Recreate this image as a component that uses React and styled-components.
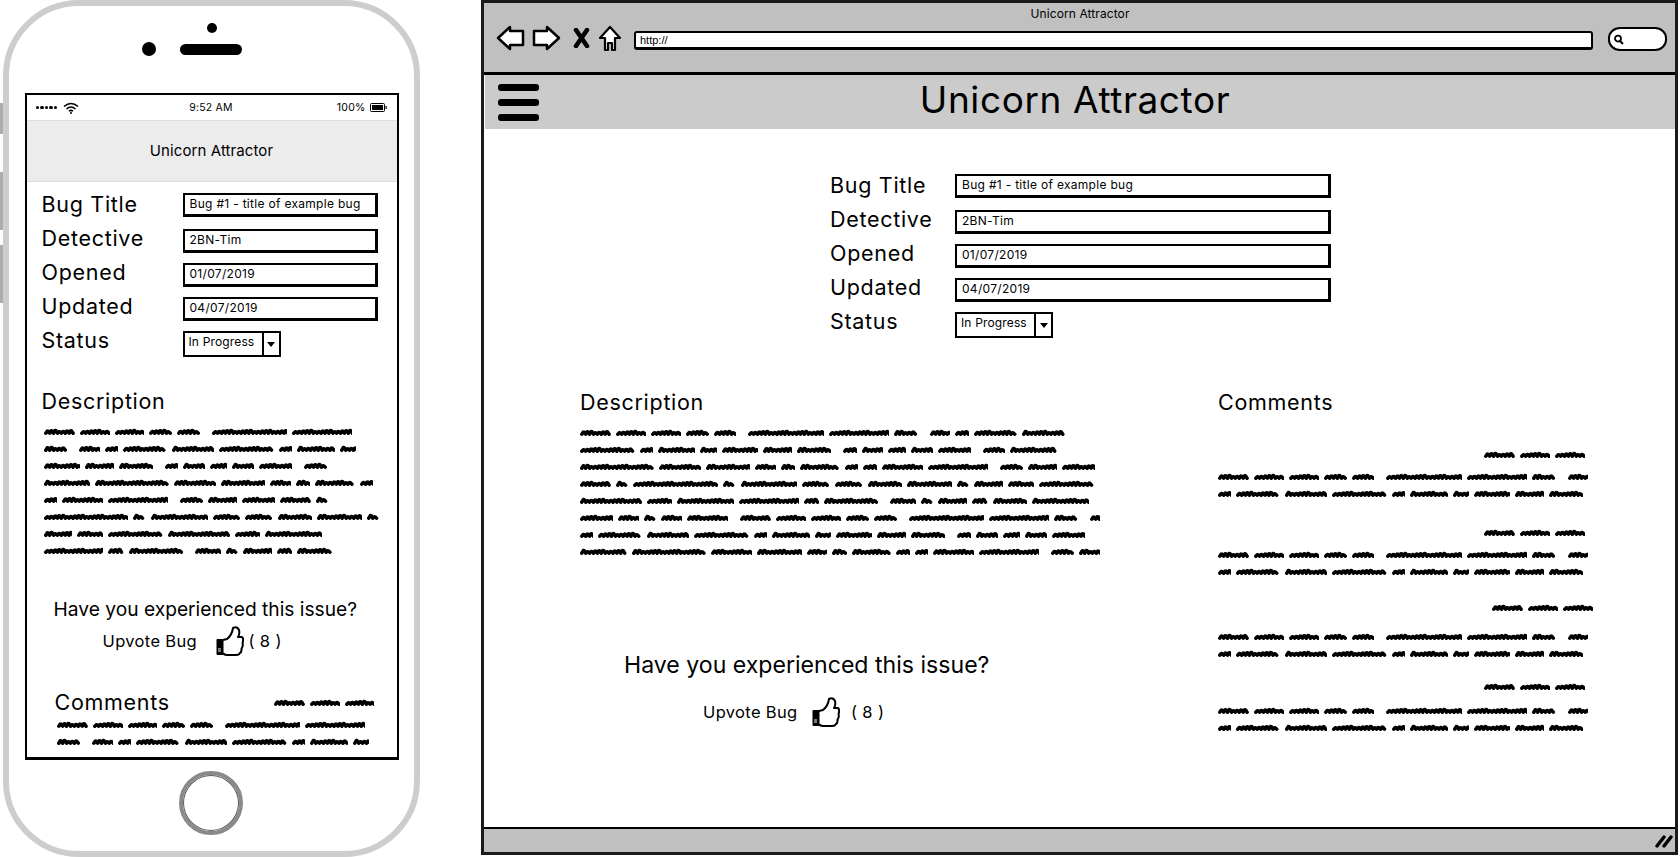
import React from "react";
import styled, { createGlobalStyle } from "styled-components";

const GlobalStyle = createGlobalStyle`
  html, body {
    margin: 0;
    background: #fff;
    overflow: hidden;
  }
  body, button {
    font-family: "Inter", "Liberation Sans", sans-serif;
    color: #000;
  }
`;

// word lengths of the greeked text, 0 marks the wider gap after a sentence
const WORDS = [
  30, 29, 29, 22, 22, 0, 73, 58, 23, 0, 20, 13, 42, 41, 53, 13, 36, 16, 35, 28, 33, 0, 13, 21, 17, 21, 32, 0, 22, 45,
  72, 40, 43, 20, 14, 38, 13, 13, 40, 58, 0, 22, 28, 32, 30, 12, 82, 12, 55, 27, 27, 33, 43, 12, 28, 25, 53, 60, 24,
  55, 58, 15, 52, 0, 25, 12, 28, 15, 33, 55, 32, 20, 12, 20, 40, 0,
];
const WORD_SCALE = 1.034;

const PHONE_LINES = [[0, 7], [8, 17], [18, 28], [29, 36], [37, 45], [46, 53], [54, 59], [60, 68]];
const DESKTOP_LINES = [[0, 13], [14, 29], [30, 43], [44, 56], [57, 69], [70, 86], [87, 103], [105, 118]];
const AUTHOR = [[0, 2]];
const PHONE_COMMENT = [[0, 7], [8, 17]];
const DESKTOP_COMMENT = [[0, 10], [11, 20]];

const COMMENTS = [
  { top: 29.5, gap: 5, shift: 0 },
  { top: 22, gap: 5, shift: 0 },
  { top: 19, gap: 12, shift: 8 },
  { top: 16, gap: 7, shift: 0 },
];

const wordsFor = ([from, to]) => {
  const out = [];
  for (let i = from; i <= to; i++) out.push(WORDS[i % WORDS.length]);
  return out;
};

// one scribbled word: little humps that always come back to the same baseline
const squigglePath = (width) => {
  let d = "M1.8 5.2";
  let x = 1.8;
  let i = Math.round(width);
  while (x < width - 3) {
    const up = (1.5 + ((i * 7) % 5) * 0.3).toFixed(1);
    d += ` l1.5 -${up} l0.9 0.2 l1.5 ${(up - 0.2).toFixed(1)}`;
    x += 3.9;
    i += 3;
  }
  return d;
};

const Canvas = styled.div`
  display: flex;
  align-items: flex-start;
  gap: 61px;
  width: 1680px;
  height: 857px;
  padding-left: 3px;
  box-sizing: border-box;
`;

/* phone */
const Phone = styled.div`
  position: relative;
  flex: none;
  box-sizing: border-box;
  width: 417px;
  height: 857px;
  border: 6px solid #cdcdcd;
  border-radius: 76px;
  display: flex;
  flex-direction: column;
  align-items: center;
`;

const SideKey = styled.span`
  position: absolute;
  left: -9px;
  top: ${(p) => p.$top}px;
  width: 3px;
  height: ${(p) => p.$height}px;
  background: #adadad;
`;

const Earpiece = styled.div`
  height: 87px;
  flex: none;
  padding-top: 17px;
  box-sizing: border-box;
  display: flex;
  flex-direction: column;
  align-items: center;
  gap: 9px;
`;

const Dot = styled.span`
  display: block;
  width: ${(p) => p.$size}px;
  height: ${(p) => p.$size}px;
  border-radius: 50%;
  background: #000;
`;

const SpeakerRow = styled.div`
  display: flex;
  align-items: center;
  gap: 24px;
  margin-right: 39px;
`;

const Speaker = styled.span`
  width: 62px;
  height: 11px;
  border-radius: 6px;
  background: #000;
`;

const Screen = styled.div`
  flex: none;
  box-sizing: border-box;
  width: 374px;
  height: 667px;
  border: 2px solid #000;
  border-bottom-width: 3px;
  overflow: hidden;
`;

const StatusBar = styled.div`
  display: grid;
  grid-template-columns: 1fr auto 1fr;
  align-items: center;
  height: 25px;
  padding: 0 10px 0 9px;
  font-size: 10.5px;
  letter-spacing: 0.2px;
`;

const StatusSide = styled.div`
  display: flex;
  align-items: center;
  gap: ${(p) => p.$gap}px;
  justify-content: ${(p) => (p.$end ? "flex-end" : "flex-start")};
`;

const SignalDots = styled.span`
  display: flex;
  gap: 1px;
`;

const NavBar = styled.div`
  height: 62px;
  box-sizing: border-box;
  display: flex;
  align-items: center;
  justify-content: center;
  padding-bottom: 2px;
  background: #ececec;
  border-top: 1px solid #ddd;
  border-bottom: 1px solid #ddd;
  font-size: 15px;
  letter-spacing: 0.1px;
`;

const PhoneBody = styled.div`
  padding: 6px 0 0 15px;
`;

const HomeButton = styled.div`
  flex: none;
  box-sizing: border-box;
  width: 64px;
  height: 64px;
  margin-top: 11px;
  margin-right: 1px;
  border-radius: 50%;
  border: 4px solid #8a8a8a;
  box-shadow: inset 0 0 0 1px #555;
`;

/* form */
const FormBlock = styled.div`
  display: flex;
  margin-left: ${(p) => p.$left || 0}px;
`;

const LabelColumn = styled.div`
  width: ${(p) => p.$width}px;
  flex: none;
`;

const FieldLabel = styled.div`
  height: 34px;
  line-height: 32px;
  font-size: 21.5px;
  letter-spacing: 0.7px;
`;

const FieldColumn = styled.div`
  padding-top: 5px;
  display: flex;
  flex-direction: column;
  gap: 10px;
  & > :first-child {
    margin-bottom: 2px;
  }
`;

const Field = styled.div`
  box-sizing: border-box;
  width: ${(p) => p.$width}px;
  height: 24px;
  border: 2px solid #000;
  border-bottom-width: 3px;
  border-right-width: 3px;
  padding-left: 5px;
  font-size: 12px;
  line-height: 18px;
  letter-spacing: 0.3px;
  white-space: nowrap;
`;

const Select = styled.div`
  box-sizing: border-box;
  display: flex;
  width: 98px;
  height: 26px;
  border: 2px solid #000;
  font-size: 12px;
  line-height: 18px;
  letter-spacing: 0.15px;
`;

const SelectValue = styled.span`
  flex: 1;
  padding-left: 4px;
  white-space: nowrap;
`;

const SelectArrow = styled.span`
  width: 17px;
  flex: none;
  box-sizing: border-box;
  border-left: 2px solid #000;
  display: flex;
  align-items: center;
  justify-content: center;
  &::after {
    content: "";
    border: 4.5px solid transparent;
    border-top: 5px solid #000;
    border-bottom: 0;
  }
`;

const Heading = styled.h2`
  margin: ${(p) => p.$top || 0}px 0 0 ${(p) => p.$left || 0}px;
  height: 30px;
  font-size: 21.5px;
  line-height: 28px;
  font-weight: 400;
  letter-spacing: 0.7px;
`;

const Greek = styled.div`
  margin: ${(p) => p.$top || 0}px 0 0 ${(p) => p.$left || 0}px;
  width: ${(p) => p.$width}px;
`;

const GreekLine = styled.div`
  display: flex;
  align-items: center;
  gap: 5px;
  height: 17px;
  overflow: hidden;
  width: 100%;
`;

const SentenceGap = styled.span`
  flex: none;
  width: 2px;
`;

const WordSvg = styled.svg`
  flex: none;
  display: block;
`;

const Question = styled.div`
  margin: ${(p) => p.$top}px 0 0 ${(p) => p.$left}px;
  height: 30px;
  line-height: 30px;
  font-size: ${(p) => p.$size}px;
  letter-spacing: ${(p) => p.$spacing}px;
  white-space: nowrap;
`;

const UpvoteRow = styled.div`
  display: flex;
  align-items: center;
  height: 30px;
  margin: ${(p) => p.$top}px 0 0 ${(p) => p.$left}px;
  font-size: 16.5px;
  letter-spacing: 0.35px;
`;

const UpvoteLabel = styled.span`
  width: 95px;
  white-space: nowrap;
  margin-right: ${(p) => p.$gap}px;
`;

const VoteCount = styled.span`
  margin-left: ${(p) => p.$gap}px;
  white-space: pre;
`;

const CommentHead = styled.div`
  display: flex;
  align-items: center;
  justify-content: space-between;
  padding-right: 19px;
`;

const PhoneHeading = styled(Heading)`
  margin-left: 13px;
`;

const AuthorWrap = styled.div`
  margin-top: 34px;
`;

/* desktop browser */
const Browser = styled.div`
  flex: none;
  box-sizing: border-box;
  width: 1197px;
  height: 855px;
  border: 3px solid #1a1a1a;
  display: flex;
  flex-direction: column;
`;

const Toolbar = styled.div`
  flex: none;
  box-sizing: border-box;
  height: 72px;
  background: #c0c0c0;
  border-bottom: 3px solid #000;
  padding: 3px 11px 0 12px;
`;

const WindowTitle = styled.div`
  text-align: center;
  font-size: 12px;
  line-height: 15px;
  letter-spacing: 0.1px;
`;

const NavRow = styled.div`
  display: flex;
  align-items: center;
  margin-top: 2px;
  height: 30px;
`;

const ToolIcon = styled.svg`
  flex: none;
  display: block;
  margin-right: ${(p) => p.$after}px;
`;

const UrlBar = styled.div`
  box-sizing: border-box;
  flex: none;
  width: 959px;
  height: 19px;
  margin: 5px 0 0 12px;
  background: #fff;
  border: 2px solid #000;
  border-bottom-width: 3px;
  border-radius: 3px;
  padding-left: 4px;
  font-family: "Liberation Sans", sans-serif;
  font-size: 11px;
  line-height: 14px;
`;

const SearchPill = styled.div`
  box-sizing: border-box;
  flex: none;
  display: flex;
  align-items: center;
  width: 59px;
  height: 24px;
  margin: 2px 0 0 15px;
  padding-left: 3px;
  background: #fff;
  border: 2px solid #000;
  border-radius: 12px / 11px;
`;

const HeaderBar = styled.div`
  flex: none;
  box-sizing: border-box;
  display: flex;
  align-items: center;
  height: 54px;
  margin: 0 0 0 1px;
  width: 1190px;
  background: #cbcbcb;
  padding-left: 13px;
`;

const BurgerStack = styled.div`
  flex: none;
  width: 41px;
  display: flex;
  flex-direction: column;
  gap: 8px;
`;

const BurgerBar = styled.span`
  height: 7px;
  border-radius: 3px;
  background: #000;
`;

const PageTitle = styled.h1`
  flex: 1;
  margin: 0;
  padding: 0 64px 4px 0;
  text-align: center;
  font-size: 37px;
  line-height: 50px;
  font-weight: 400;
  letter-spacing: 0.6px;
`;

const DesktopBody = styled.div`
  flex: 1;
  padding-top: 40px;
`;

const Columns = styled.div`
  display: flex;
  gap: 118px;
  margin: 49px 0 0 96px;
`;

const Column = styled.div`
  width: ${(p) => p.$width}px;
  flex: none;
`;

const CommentBlock = styled.div`
  margin-top: ${(p) => p.$top}px;
`;

const AuthorRow = styled.div`
  display: flex;
  justify-content: flex-end;
  margin-right: ${(p) => -p.$shift}px;
  margin-bottom: ${(p) => p.$gap}px;
`;

const FooterBar = styled.div`
  flex: none;
  box-sizing: border-box;
  height: 25px;
  display: flex;
  align-items: center;
  justify-content: flex-end;
  background: #c0c0c0;
  border-top: 2px solid #000;
  padding-right: 2px;
`;

function Word({ width }) {
  const w = width * WORD_SCALE;
  return (
    <WordSvg width={w} height="10" viewBox={`0 0 ${w} 10`}>
      <path d={squigglePath(w)} fill="none" stroke="#000" strokeWidth="3.5" strokeLinecap="round" strokeLinejoin="round" />
    </WordSvg>
  );
}

function GreekText({ lines, width, top, left }) {
  return (
    <Greek $width={width} $top={top} $left={left}>
      {lines.map((range, i) => (
        <GreekLine key={i}>
          {wordsFor(range).map((w, j) => (w === 0 ? <SentenceGap key={j} /> : <Word key={j} width={w} />))}
        </GreekLine>
      ))}
    </Greek>
  );
}

function BugForm({ labelWidth, fieldWidth, left }) {
  return (
    <FormBlock $left={left}>
      <LabelColumn $width={labelWidth}>
        {["Bug Title", "Detective", "Opened", "Updated", "Status"].map((l) => (
          <FieldLabel key={l}>{l}</FieldLabel>
        ))}
      </LabelColumn>
      <FieldColumn>
        <Field $width={fieldWidth}>Bug #1 - title of example bug</Field>
        <Field $width={fieldWidth}>2BN-Tim</Field>
        <Field $width={fieldWidth}>01/07/2019</Field>
        <Field $width={fieldWidth}>04/07/2019</Field>
        <Select>
          <SelectValue>In Progress</SelectValue>
          <SelectArrow />
        </Select>
      </FieldColumn>
    </FormBlock>
  );
}

function ThumbIcon() {
  return (
    <svg width="28" height="30" viewBox="0 0 28 30" style={{ flex: "none" }}>
      <path
        d="M7 14 L11 13 Q16 9 17 2 Q21 0 23 4 Q24 8 22 11 L26 11 Q28 13 26.5 17 Q27.5 20 25.5 22.5 Q26 26 23.5 27.5 Q23 29 20 29 L11 29 Q8 29 7 27"
        fill="#fff"
        stroke="#000"
        strokeWidth="2"
        strokeLinejoin="round"
      />
      <rect x="0.5" y="13" width="7" height="16" rx="1" fill="#000" />
      <rect x="2" y="22" width="3" height="4" fill="#777" />
    </svg>
  );
}

function WifiIcon() {
  return (
    <svg width="16" height="12" viewBox="0 0 16 12">
      <path d="M1 4.5 Q8 -1.5 15 4.5 M3.5 7 Q8 3 12.5 7 M6 9.2 Q8 7.6 10 9.2" fill="none" stroke="#000" strokeWidth="1.6" />
      <circle cx="8" cy="11" r="1" fill="#000" />
    </svg>
  );
}

function BatteryIcon() {
  return (
    <svg width="17" height="9" viewBox="0 0 17 9">
      <rect x="0.5" y="0.5" width="14" height="8" rx="1" fill="#fff" stroke="#000" />
      <rect x="2" y="2" width="11" height="5" fill="#000" />
      <rect x="15.5" y="3" width="1.2" height="3" fill="#000" />
    </svg>
  );
}

function PhoneMockup() {
  return (
    <Phone>
      <SideKey $top={97} $height={31} />
      <SideKey $top={166} $height={58} />
      <SideKey $top={239} $height={58} />
      <Earpiece>
        <Dot $size={10} />
        <SpeakerRow>
          <Dot $size={14} />
          <Speaker />
        </SpeakerRow>
      </Earpiece>
      <Screen>
        <StatusBar>
          <StatusSide $gap={6}>
            <SignalDots>
              {[0, 1, 2, 3, 4].map((d) => (
                <Dot key={d} $size={3.5} />
              ))}
            </SignalDots>
            <WifiIcon />
          </StatusSide>
          <span>9:52 AM</span>
          <StatusSide $end $gap={4}>
            <span>100%</span>
            <BatteryIcon />
          </StatusSide>
        </StatusBar>
        <NavBar>Unicorn Attractor</NavBar>
        <PhoneBody>
          <BugForm labelWidth={141} fieldWidth={195} />
          <Heading $top={29}>Description</Heading>
          <GreekText lines={PHONE_LINES} width={340} top={7.5} left={2} />
          <Question $top={33} $left={12} $size={19.2} $spacing={0}>
            Have you experienced this issue?
          </Question>
          <UpvoteRow $top={2} $left={61}>
            <UpvoteLabel $gap={18}>Upvote Bug</UpvoteLabel>
            <ThumbIcon />
            <VoteCount $gap={5}>( 8 )</VoteCount>
          </UpvoteRow>
          <CommentHead>
            <PhoneHeading $top={32}>Comments</PhoneHeading>
            <AuthorWrap>
              <GreekText lines={AUTHOR} width={104} />
            </AuthorWrap>
          </CommentHead>
          <GreekText lines={PHONE_COMMENT} width={330} top={0} left={15} />
        </PhoneBody>
      </Screen>
      <HomeButton />
    </Phone>
  );
}

function BrowserMockup() {
  return (
    <Browser>
      <Toolbar>
        <WindowTitle>Unicorn Attractor</WindowTitle>
        <NavRow>
          <ToolIcon $after={7} width="29" height="26" viewBox="0 0 29 26">
            <path d="M2 13 L14 2 L14 6 L27 6 L27 20 L14 20 L14 24 Z" fill="#fff" stroke="#000" strokeWidth="2.5" strokeLinejoin="round" />
          </ToolIcon>
          <ToolIcon $after={12} width="29" height="26" viewBox="0 0 29 26">
            <path d="M27 13 L15 2 L15 6 L2 6 L2 20 L15 20 L15 24 Z" fill="#fff" stroke="#000" strokeWidth="2.5" strokeLinejoin="round" />
          </ToolIcon>
          <ToolIcon $after={8} width="17" height="20" viewBox="0 0 17 20">
            <path d="M3 2 L14 18 M14 2 L3 18" fill="none" stroke="#000" strokeWidth="4.5" strokeLinecap="round" />
          </ToolIcon>
          <ToolIcon $after={0} width="24" height="27" viewBox="0 0 24 27">
            <path d="M12 2 L22 13 L17 13 L17 25 L14 25 L14 18 L10 18 L10 25 L7 25 L7 13 L2 13 Z" fill="#fff" stroke="#000" strokeWidth="2.2" strokeLinejoin="round" />
          </ToolIcon>
          <UrlBar>http://</UrlBar>
          <SearchPill>
            <svg width="11" height="11" viewBox="0 0 11 11">
              <circle cx="5" cy="4.6" r="3" fill="none" stroke="#000" strokeWidth="1.8" />
              <path d="M7 7 L10 10" stroke="#000" strokeWidth="2" />
            </svg>
          </SearchPill>
        </NavRow>
      </Toolbar>
      <HeaderBar>
        <BurgerStack>
          <BurgerBar />
          <BurgerBar />
          <BurgerBar />
        </BurgerStack>
        <PageTitle>Unicorn Attractor</PageTitle>
      </HeaderBar>
      <DesktopBody>
        <BugForm labelWidth={125} fieldWidth={376} left={346} />
        <Columns>
          <Column $width={520}>
            <Heading>Description</Heading>
            <GreekText lines={DESKTOP_LINES} width={520} top={7.5} />
            <Question $top={88} $left={44} $size={23.1} $spacing={0}>
              Have you experienced this issue?
            </Question>
            <UpvoteRow $top={17} $left={123}>
              <UpvoteLabel $gap={14}>Upvote Bug</UpvoteLabel>
              <ThumbIcon />
              <VoteCount $gap={11}>( 8 )</VoteCount>
            </UpvoteRow>
          </Column>
          <Column $width={370}>
            <Heading>Comments</Heading>
            {COMMENTS.map((c, i) => (
              <CommentBlock key={i} $top={c.top}>
                <AuthorRow $shift={c.shift} $gap={c.gap}>
                  <GreekText lines={AUTHOR} width={104} />
                </AuthorRow>
                <GreekText lines={DESKTOP_COMMENT} width={370} />
              </CommentBlock>
            ))}
          </Column>
        </Columns>
      </DesktopBody>
      <FooterBar>
        <svg width="18" height="14" viewBox="0 0 18 14">
          <path d="M2 12 L9 3 M9 12 L16 3" stroke="#000" strokeWidth="3.4" strokeLinecap="round" />
        </svg>
      </FooterBar>
    </Browser>
  );
}

export default function App() {
  return (
    <>
      <GlobalStyle />
      <Canvas>
        <PhoneMockup />
        <BrowserMockup />
      </Canvas>
    </>
  );
}
